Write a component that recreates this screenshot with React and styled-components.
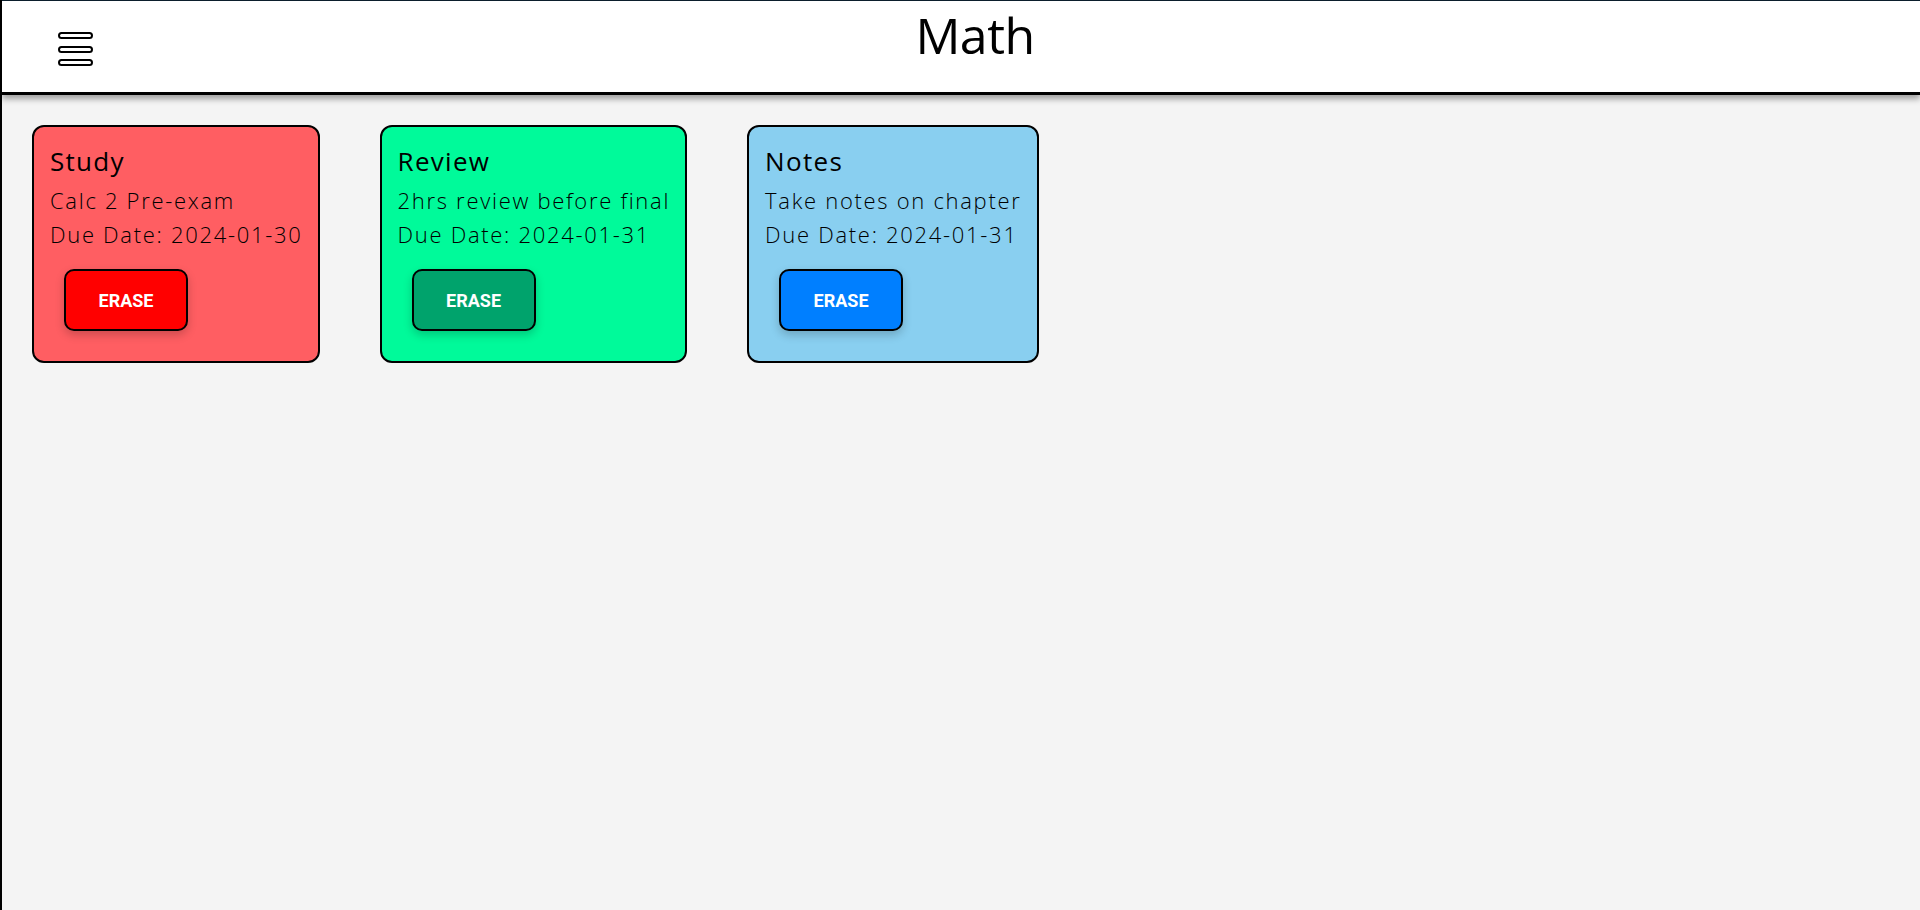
import * as React from "react";
import styled, { createGlobalStyle } from "styled-components";

const GlobalStyle = createGlobalStyle`
    body {
        margin: 0;
        background-color: #f4f4f4;
        font-family: "Open Sans", "Liberation Sans", sans-serif;
    }
`;

const Page = styled.div`
    min-height: 100vh;
    border-left: 2px solid #000;
    box-sizing: border-box;
`;

const Header = styled.header`
    display: grid;
    grid-template-columns: 1fr auto 1fr;
    align-items: start;
    height: 91px;
    padding: 0 56px;
    background-color: #fff;
    border-top: 1px solid #0b1e2c;
    border-bottom: 3px solid #000;
    box-shadow: 0 4px 6px rgba(0, 0, 0, 0.35);
`;

const MenuButton = styled.button`
    justify-self: start;
    align-self: center;
    margin-top: 6px;
    padding: 0;
    border: none;
    background: none;
    width: 36px;
    height: 36px;
    cursor: pointer;
`;

const Title = styled.h1`
    margin: 0 0 0 28px;
    font-size: 50px;
    font-weight: 400;
    line-height: 68px;
    letter-spacing: -0.5px;
    color: #000;
`;

const Board = styled.main`
    display: flex;
    flex-wrap: wrap;
    align-items: flex-start;
`;

const Card = styled.div`
    margin: 30px;
    padding: 16px 15px 16px 16px;
    background-color: ${p => p.$bg};
    border: 2px solid #000;
    border-radius: 12px;
`;

const CardTitle = styled.h2`
    margin: 0 0 4px 0;
    font-size: 26px;
    font-weight: 400;
    line-height: 36px;
    letter-spacing: 1.3px;
    color: #000;
`;

const CardLine = styled.p`
    margin: 0;
    font-size: 22px;
    font-weight: 300;
    line-height: 34px;
    letter-spacing: 1.7px;
    color: #000;
    white-space: nowrap;
`;

const EraseButton = styled.button`
    display: block;
    width: 124px;
    height: 62px;
    margin: 18px 14px 14px 14px;
    background-color: ${p => p.$bg};
    border: 2px solid #000;
    border-radius: 10px;
    box-shadow: 0 4px 10px rgba(0, 0, 0, 0.2);
    color: #fff;
    font-family: Roboto, "Liberation Sans", sans-serif;
    font-size: 18px;
    font-weight: 700;
    cursor: pointer;
`;

const tasks = [
    { id: 1, title: "Study", text: "Calc 2 Pre-exam", due: "2024-01-30", bg: "#ff5e62", btn: "#ff0000" },
    { id: 2, title: "Review", text: "2hrs review before final", due: "2024-01-31", bg: "#00fa9a", btn: "#00a36c" },
    { id: 3, title: "Notes", text: "Take notes on chapter", due: "2024-01-31", bg: "#89cff0", btn: "#007fff" },
];

const MenuIcon = () => (
    <svg width="36" height="36" viewBox="0 0 36 36" fill="none" stroke="#000" strokeWidth="2">
        <rect x="1" y="1" width="33" height="5" rx="2.5" />
        <rect x="1" y="15" width="33" height="5" rx="2.5" />
        <rect x="1" y="28" width="33" height="5" rx="2.5" />
    </svg>
);

export default function App() {
    return (
        <Page>
            <GlobalStyle />
            <Header>
                <MenuButton aria-label="menu"><MenuIcon /></MenuButton>
                <Title>Math</Title>
            </Header>
            <Board>
                {tasks.map(task => (
                    <Card key={task.id} $bg={task.bg}>
                        <CardTitle>{task.title}</CardTitle>
                        <CardLine>{task.text}</CardLine>
                        <CardLine>Due Date: {task.due}</CardLine>
                        <EraseButton $bg={task.btn}>ERASE</EraseButton>
                    </Card>
                ))}
            </Board>
        </Page>
    );
}
